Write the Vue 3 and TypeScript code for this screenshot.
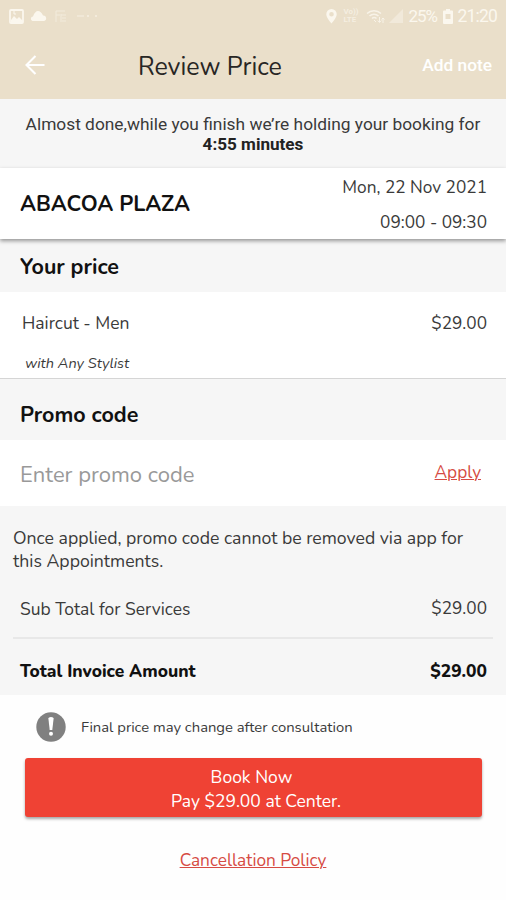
<script setup lang="ts">
interface PriceLine {
  label: string
  amount: string
}

const service: PriceLine = { label: 'Haircut - Men', amount: '$29.00' }
const subTotal: PriceLine = { label: 'Sub Total for Services', amount: '$29.00' }
const total: PriceLine = { label: 'Total Invoice Amount', amount: '$29.00' }
</script>

<template>
  <main class="screen">
    <header class="header">
      <div class="status">
        <div class="status-left">
          <svg width="15" height="15" viewBox="0 0 15 15" fill="none" stroke="currentColor">
            <rect x="1" y="1" width="13" height="13" rx="1" stroke-width="1.8" />
            <path d="M2 11l3-4 3 3 2-2 4 4v2H2z" fill="currentColor" stroke="none" />
            <path d="M5 2v3h2" />
          </svg>
          <svg class="cloud" width="17" height="12" viewBox="0 0 17 12" fill="currentColor">
            <path d="M2.500 11A2.300 2.300 0 0 1 3 6.500Q5 1 8 1t5 4.500A2.800 2.800 0 0 1 14 11z" />
          </svg>
          <svg class="faint" width="12" height="14" viewBox="0 0 12 14" fill="none" stroke="currentColor">
            <path d="M1 13V2h9M1 6h4M6 6h5M7 9h4M7 12h4M6 5v8" />
          </svg>
          <svg class="dots" width="22" height="4" viewBox="0 0 22 4" fill="currentColor">
            <rect x="0" y="1.500" width="7" height="1" />
            <circle cx="11" cy="2" r="1" />
            <circle cx="19" cy="2" r="1" />
          </svg>
        </div>
        <div class="status-right">
          <svg class="pin" width="11" height="15" viewBox="0 0 11 15" fill="currentColor" fill-rule="evenodd">
            <path d="M5.500 0A5.200 5.200 0 0 0 .3 5.300C.3 9 5.500 14.500 5.500 14.500S10.700 9 10.700 5.300A5.200 5.200 0 0 0 5.500 0zm0 3a2.300 2.300 0 1 1 0 4.600 2.300 2.300 0 0 1 0-4.600z" />
          </svg>
          <span class="volte"><span>Vo))</span><span>LTE</span></span>
          <svg class="wifi" width="19" height="15" viewBox="0 0 19 15" fill="none" stroke="currentColor" stroke-width="1.500">
            <path d="M1 4.500a10 10 0 0 1 14 0M3.500 7a6.500 6.500 0 0 1 9 0M6 9.500a3 3 0 0 1 4.500 0" />
            <path d="M8 11l2 2M13.500 8v5M11.700 11.500l1.800 2 1.800-2M17 14V9M15.500 10.500L17 9l1.500 1.500" stroke-width="1" />
          </svg>
          <svg class="signal" width="14" height="14" viewBox="0 0 14 14" fill="currentColor">
            <path d="M14 0v14H0z" />
          </svg>
          <span class="percent">25%</span>
          <svg class="battery" width="10" height="15" viewBox="0 0 10 15" fill="currentColor" fill-rule="evenodd">
            <path d="M3 0h4v1.500h2a1 1 0 0 1 1 1V14a1 1 0 0 1-1 1H1a1 1 0 0 1-1-1V2.500a1 1 0 0 1 1-1h2zM2.500 5v5h5V5z" />
          </svg>
          <span class="clock">21:20</span>
        </div>
      </div>
      <div class="toolbar">
        <svg class="back" width="20" height="20" viewBox="0 0 20 20" fill="none" stroke="#fff" stroke-width="2.100">
          <path d="M19.500 10H1.500M10.500 1L1.500 10l9 9" />
        </svg>
        <h1 class="title">Review Price</h1>
        <span class="add-note">Add note</span>
      </div>
    </header>

    <section class="banner">
      <span class="hold">Almost done,while you finish we’re holding your booking for</span>
      <strong class="timer">4:55 minutes</strong>
    </section>

    <section class="venue">
      <h2 class="venue-name">ABACOA PLAZA</h2>
      <div class="when">
        <span class="date">Mon, 22 Nov 2021</span>
        <span class="time">09:00 - 09:30</span>
      </div>
    </section>

    <h2 class="section-title price-title"><span>Your price</span></h2>
    <section class="service">
      <div class="row service-row">
        <span class="service-name">{{ service.label }}</span>
        <span class="amount">{{ service.amount }}</span>
      </div>
      <em class="stylist">with Any Stylist</em>
    </section>

    <h2 class="section-title promo-title"><span>Promo code</span></h2>
    <section class="promo">
      <span class="placeholder">Enter promo code</span>
      <a class="apply">Apply</a>
    </section>

    <section class="summary">
      <p class="notice">Once applied, promo code cannot be removed via app for<br>this Appointments.</p>
      <div class="row sub-row">
        <span class="sub-label">{{ subTotal.label }}</span>
        <span class="amount">{{ subTotal.amount }}</span>
      </div>
      <div class="row total-row">
        <span class="total-label">{{ total.label }}</span>
        <span class="total-amount">{{ total.amount }}</span>
      </div>
    </section>

    <footer class="footer">
      <div class="consult">
        <svg width="30" height="30" viewBox="0 0 30 30">
          <circle cx="15" cy="15" r="14.700" fill="#808080" />
          <path d="M12.400 6.500Q12.300 5 15 5t2.600 1.500L16.300 18h-2.600z" fill="#fff" />
          <circle cx="15" cy="21.800" r="2" fill="#fff" />
        </svg>
        <span class="consult-text">Final price may change after consultation</span>
      </div>
      <button class="book">
        <span class="book-now">Book Now</span>
        <span class="pay">Pay $29.00 at Center.</span>
      </button>
      <a class="policy">Cancellation Policy</a>
    </footer>
  </main>
</template>

<style>
body {
  margin: 0;
  background: #fff;
}
</style>

<style scoped>
.screen {
  width: 506px;
  height: 900px;
  overflow: hidden;
  background: #fefefe;
  color: #3a3a3a;
  font-family: Nunito, "Noto Sans", sans-serif;
  font-size: 17.250px;
  white-space: nowrap;
}
h1, h2, p { margin: 0; }
svg { display: block; flex: none; }
.header {
  height: 98.500px;
  background: #eadfca;
}
.status {
  display: flex;
  justify-content: space-between;
  height: 32px;
  padding: 0 9px;
  color: #fbf7ee;
  font-family: Roboto, sans-serif;
}
.status-left, .status-right {
  display: flex;
  align-items: center;
}
.cloud { margin-left: 6px; }
.faint { margin-left: 8px; opacity: .5; }
.dots { margin-left: 10px; opacity: .7; }
.volte {
  display: flex;
  flex-direction: column;
  width: 15px;
  margin-left: 6px;
  font-size: 8px;
  font-weight: 700;
  line-height: 8px;
  opacity: .65;
}
.wifi { margin-left: 8px; opacity: .85; }
.signal { margin-left: 4px; opacity: .45; }
.percent {
  width: 30px;
  margin-left: 5px;
  font-size: 17px;
  letter-spacing: -1px;
}
.battery { margin-left: 5px; }
.clock {
  margin-left: 4px;
  font-size: 17.500px;
  letter-spacing: -.8px;
}
.toolbar {
  display: flex;
  align-items: center;
  height: 66px;
  padding: 0 14px 0 25px;
}
.title {
  margin: 3px 0 0 93px;
  color: #282624;
  font-size: 25px;
  font-weight: 400;
  line-height: 34px;
}
.add-note {
  margin-left: auto;
  color: #fff;
  font: 500 17.300px/22px Roboto, sans-serif;
}
.banner {
  display: flex;
  flex-direction: column;
  align-items: center;
  height: 54.500px;
  padding-top: 15px;
  background: #f6f6f6;
  font: 17.330px/20px Roboto, sans-serif;
}
.timer { color: #222; font-size: 17.100px; font-weight: 700; }
.venue {
  position: relative;
  display: flex;
  align-items: center;
  justify-content: space-between;
  height: 71px;
  padding: 0 19px 0 20px;
  background: #fff;
  box-shadow: 0 2px 4px rgba(0, 0, 0, .4);
}
.venue-name {
  color: #111;
  font-size: 21.600px;
  font-weight: 700;
}
.when {
  display: flex;
  flex-direction: column;
  align-items: flex-end;
  margin-top: 3px;
  line-height: 35px;
}
.section-title {
  display: flex;
  align-items: center;
  padding-left: 20px;
  background: #f6f6f6;
  color: #111;
  font-size: 21.500px;
  font-weight: 700;
}
.price-title { height: 53px; }
.price-title span { margin-top: 2px; }
.promo-title { height: 61px; }
.promo-title span { margin-top: 10px; }
.row {
  display: flex;
  align-items: center;
  justify-content: space-between;
}
.service {
  height: 86px;
  border-bottom: 1px solid #d5d5d5;
  background: #fff;
}
.service-row {
  height: 62px;
  padding: 0 19px 0 22px;
}
.service-name { font-size: 17.500px; }
.stylist {
  display: block;
  padding-left: 25px;
  font-size: 14.550px;
  line-height: 18px;
}
.promo {
  display: flex;
  align-items: center;
  justify-content: space-between;
  height: 66px;
  padding: 0 25px 0 20px;
  background: #fff;
}
.placeholder {
  margin-top: 3px;
  color: #999;
  font-size: 22px;
}
.apply {
  margin-top: -1px;
  color: #d64b43;
  text-decoration: underline;
  text-decoration-thickness: 1px;
}
.summary {
  height: 189px;
  background: #f6f6f6;
}
.notice {
  height: 53px;
  padding: 21px 13px 0;
  font-size: 17.660px;
  line-height: 23px;
}
.sub-row {
  height: 57px;
  margin: 0 13px;
  padding: 0 6px 0 7px;
  border-bottom: 2px solid #e8e8e8;
}
.sub-label { font-size: 17.450px; }
.total-row {
  height: 63px;
  padding: 0 19px 0 20px;
  color: #111;
  font-size: 17.400px;
  font-weight: 800;
}
.footer {
  display: flex;
  flex-direction: column;
  align-items: center;
}
.consult {
  display: flex;
  align-items: center;
  align-self: flex-start;
  gap: 15px;
  height: 63px;
  padding-left: 36px;
  font-size: 14.800px;
}
.book {
  display: flex;
  flex-direction: column;
  align-items: center;
  width: 457px;
  height: 59px;
  padding: 7px 0 0;
  border: 0;
  border-radius: 3px;
  background: #ef4234;
  box-shadow: 0 2px 3px rgba(0, 0, 0, .35);
  color: #fff;
  font: inherit;
  font-size: 17.500px;
  line-height: 24px;
}
.book-now { padding-right: 3px; }
.pay { padding-left: 6px; }
.policy {
  margin-top: 33px;
  color: #d64b43;
  line-height: 22px;
  text-decoration: underline;
  text-decoration-thickness: 1px;
}
</style>
